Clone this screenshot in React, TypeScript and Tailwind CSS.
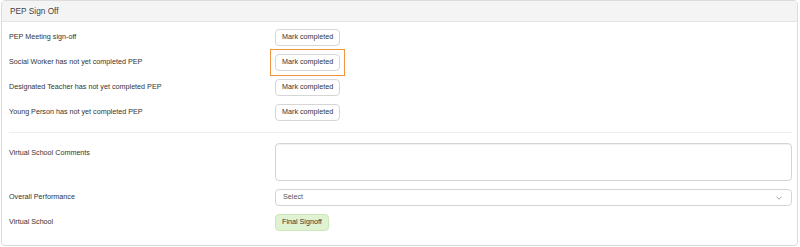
import React from 'react';

const rows = [
  'PEP Meeting sign-off',
  'Social Worker has not yet completed PEP',
  'Designated Teacher has not yet completed PEP',
  'Young Person has not yet completed PEP',
];

export default function App() {
  return (
    <div className="w-[800px] h-[247px] bg-white pl-px pr-0.5 font-['Liberation_Sans',Arial,sans-serif] text-[#333]">
      <div className="h-[246px] border border-[#dcdcdc] rounded-sm flex flex-col">
        <div className="h-[21px] shrink-0 bg-[#f4f4f4] border-b border-[#e4e4e4] px-2 flex items-center text-[8.3px] text-[#444]">
          PEP Sign Off
        </div>

        <div className="pl-[7px] pr-[5px] pt-[3px]">
          {rows.map((label, i) => (
            <div key={i} className="h-[25px] flex items-center">
              <div className="w-[266px] text-[7.2px]">{label}</div>
              <span
                className={
                  i === 1
                    ? 'flex outline-[1.5px] outline-solid outline-offset-[4.5px] outline-[#f0953f]'
                    : 'flex'
                }
              >
                <button className="h-[17px] px-[6px] bg-white border border-[#d6d6d6] rounded-sm text-[7.2px] text-[#333]">
                  Mark completed
                </button>
              </span>
            </div>
          ))}

          <div className="mt-[7px] h-px bg-[#eeeeee]" />

          <div className="mt-[10px] flex items-start">
            <div className="w-[266px] pt-[5px] text-[7.2px]">Virtual School Comments</div>
            <textarea className="flex-1 h-[38px] border border-[#d4d4d4] rounded-sm resize-none shadow-[inset_0_1px_1px_rgba(0,0,0,0.06)]" />
          </div>

          <div className="mt-[8px] flex items-center">
            <div className="w-[266px] text-[7.2px]">Overall Performance</div>
            <div className="flex-1 h-[17px] border border-[#d4d4d4] rounded-sm flex items-center justify-between pl-[7px] pr-[9px] text-[7.2px] text-[#555]">
              <span>Select</span>
              <svg width="6" height="4" viewBox="0 0 6 4" fill="none">
                <path d="M0.5 0.8 L3 3.2 L5.5 0.8" stroke="#999" strokeWidth="0.9" />
              </svg>
            </div>
          </div>

          <div className="mt-[8px] flex items-center">
            <div className="w-[266px] text-[7.2px]">Virtual School</div>
            <div className="h-[17px] px-[6px] flex items-center bg-[#dff3d2] border border-[#cbe6b8] rounded-sm text-[7.2px] text-[#333]">
              Final Signoff
            </div>
          </div>
        </div>
      </div>
    </div>
  );
}
